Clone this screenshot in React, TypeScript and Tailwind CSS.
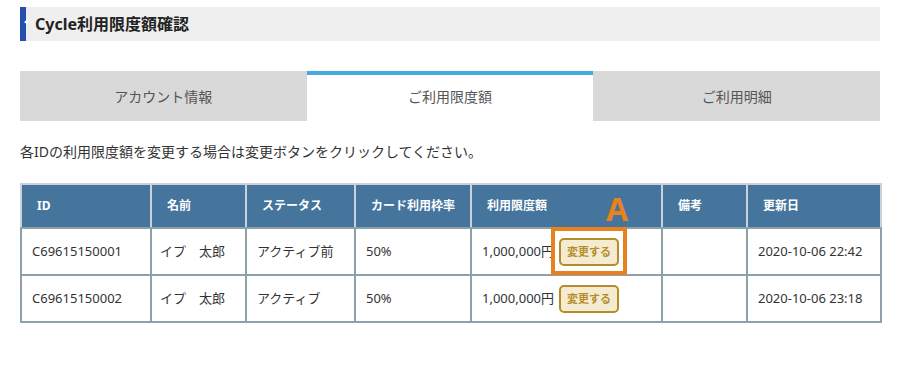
import React from "react";

const rows = [
  { id: "C69615150001", name: "イプ　太郎", status: "アクティブ前", rate: "50%", limit: "1,000,000円", date: "2020-10-06 22:42" },
  { id: "C69615150002", name: "イプ　太郎", status: "アクティブ", rate: "50%", limit: "1,000,000円", date: "2020-10-06 23:18" },
];

const heads = ["ID", "名前", "ステータス", "カード利用枠率", "利用限度額", "備考", "更新日"];
const widths = [130, 95, 109, 116, 191, 85, 134];

export default function App() {
  return (
    <div className="w-[900px] h-[379px] bg-white px-[20px] pt-[7px] font-['Noto_Sans','Noto_Sans_CJK_JP',sans-serif] text-[#333]">
      <div className="relative h-[34px] bg-[#efefef] border-l-[6px] border-[#2150ad] flex items-center pl-[9px]">
        <span className="absolute left-0 top-[12px] w-0 h-0 border-y-[3px] border-y-transparent border-r-[4px] border-r-white -ml-[2px]" />
        <h1 className="text-[16px] font-bold text-[#222] leading-none">Cycle利用限度額確認</h1>
      </div>

      <div className="mt-[30px] grid grid-cols-3 h-[50px] text-[14px] text-[#555]">
        <div className="bg-[#d9d9d9] flex items-center justify-center">アカウント情報</div>
        <div className="bg-white border-t-4 border-[#46a9df] flex items-center justify-center pb-[4px]">ご利用限度額</div>
        <div className="bg-[#d9d9d9] flex items-center justify-center">ご利用明細</div>
      </div>

      <p className="mt-[21px] text-[14px] leading-[20px] text-[#333]">各IDの利用限度額を変更する場合は変更ボタンをクリックしてください。</p>

      <div className="relative mt-[21px] w-[860px]">
        <table className="w-[860px] table-fixed border-collapse border border-[#c5ccd0]">
          <colgroup>
            {widths.map((w, i) => (
              <col key={i} style={{ width: w }} />
            ))}
          </colgroup>
          <thead>
            <tr className="h-[44px] bg-[#45759d]">
              {heads.map((h) => (
                <th key={h} className="border-2 border-[#c9d3d9] border-b-[#8da1ab] text-left pl-[15px] text-[12px] font-bold text-white">
                  {h}
                </th>
              ))}
            </tr>
          </thead>
          <tbody>
            {rows.map((r) => (
              <tr key={r.id} className="h-[47px] text-[13px] text-[#333]">
                <td className="border-2 border-[#8da1ab] pl-[10px]">{r.id}</td>
                <td className="border-2 border-[#8da1ab] pl-[8px]">{r.name}</td>
                <td className="border-2 border-[#8da1ab] pl-[10px]">{r.status}</td>
                <td className="border-2 border-[#8da1ab] pl-[10px]">{r.rate}</td>
                <td className="border-2 border-[#8da1ab] pl-[10px]">
                  <div className="flex items-center">
                    <span>{r.limit}</span>
                    <button className="ml-[5px] w-[60px] h-[28px] rounded-[5px] border-2 border-[#b48d2a] bg-[#f4ebd1] text-[11px] font-bold text-[#b48d2a] leading-none">
                      変更する
                    </button>
                  </div>
                </td>
                <td className="border-2 border-[#8da1ab]"></td>
                <td className="border-2 border-[#8da1ab] pl-[10px]">{r.date}</td>
              </tr>
            ))}
          </tbody>
        </table>
        <div className="absolute left-[531px] top-[44px] w-[76px] h-[48px] border-4 border-[#e8821e] pointer-events-none" />
        <div className="absolute left-[586px] top-[10px] text-[32px] leading-[32px] font-bold text-[#e8821e] font-['Open_Sans',sans-serif]">A</div>
      </div>
    </div>
  );
}
